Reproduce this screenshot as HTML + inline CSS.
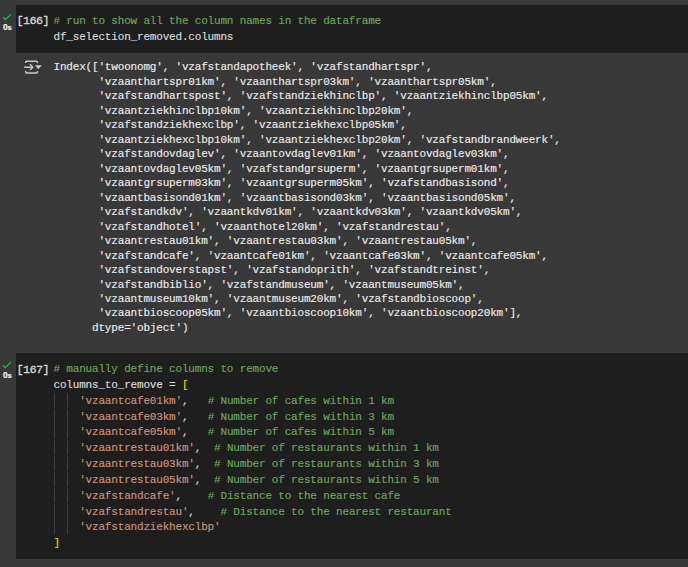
<!DOCTYPE html>
<html><head><meta charset="utf-8">
<style>
html,body{margin:0;padding:0;}
body{width:688px;height:567px;background:#383838;position:relative;overflow:hidden;font-family:"Liberation Mono",monospace;}
.cell{position:absolute;left:16px;right:0;background:#1e1e1e;}
.ln{position:absolute;white-space:pre;font-size:11px;letter-spacing:-0.18px;line-height:14px;height:14px;color:#dcdcdc;-webkit-text-stroke:0.15px currentColor;}
.out{color:#ebebeb;}
.c{color:#6ca65a;}
.s{color:#ce9178;}
.g{color:#ffd700;}
.cnt{position:absolute;white-space:pre;font-size:11.8px;letter-spacing:-0.55px;line-height:14px;color:#dadada;-webkit-text-stroke:0.3px currentColor;}
.secs{position:absolute;font-family:"Liberation Sans",sans-serif;font-weight:bold;font-size:8.5px;line-height:10px;color:#f0f0f0;letter-spacing:-0.2px;-webkit-text-stroke:0.2px currentColor;}
.guide{position:absolute;width:1px;background:#3e3e3e;}
svg{position:absolute;overflow:visible;}
</style></head><body>

<!-- cell 1 -->
<div class="cell" style="top:5px;height:48px;"></div>
<svg style="left:0;top:0" width="20" height="40"><polyline points="3,17.3 5.5,19.4 10.8,14.4" fill="none" stroke="#12c65a" stroke-width="1.15"/></svg>
<div class="secs" style="left:3px;top:22px;">0<span style="font-size:7.6px">s</span></div>
<div class="cnt" style="left:16.5px;top:13.8px;">[166]</div>
<div class="ln" style="left:53.5px;top:14px;"><span class="c"># run to show all the column names in the dataframe</span></div>
<div class="ln" style="left:53.5px;top:30px;">df_selection_removed.columns</div>

<!-- output icon -->
<svg style="left:0;top:0" width="60" height="90">
<g fill="none" stroke="#c8c8c8" stroke-width="1.4">
<path d="M25.6,63 V62.1 Q25.6,61.2 26.5,61.2 H36.5 Q37.4,61.2 37.4,62.1 V63"/>
<path d="M25.6,71 V72.1 Q25.6,73 26.5,73 H36.5 Q37.4,73 37.4,72.1 V71"/>
<path d="M24.2,67.2 H32.4 M30,64.3 L32.8,67.2 L30,70"/>
</g>
<path d="M35,65.3 H41.9 L38.3,69.2 Z" fill="#c8c8c8"/>
</svg>

<div class="ln out" style="left:53.5px;top:60px;">Index(['twoonomg', 'vzafstandapotheek', 'vzafstandhartspr',</div>
<div class="ln out" style="left:53.5px;top:74.5px;">       'vzaanthartspr01km', 'vzaanthartspr03km', 'vzaanthartspr05km',</div>
<div class="ln out" style="left:53.5px;top:89px;">       'vzafstandhartspost', 'vzafstandziekhinclbp', 'vzaantziekhinclbp05km',</div>
<div class="ln out" style="left:53.5px;top:103.5px;">       'vzaantziekhinclbp10km', 'vzaantziekhinclbp20km',</div>
<div class="ln out" style="left:53.5px;top:118px;">       'vzafstandziekhexclbp', 'vzaantziekhexclbp05km',</div>
<div class="ln out" style="left:53.5px;top:132.5px;">       'vzaantziekhexclbp10km', 'vzaantziekhexclbp20km', 'vzafstandbrandweerk',</div>
<div class="ln out" style="left:53.5px;top:147px;">       'vzafstandovdaglev', 'vzaantovdaglev01km', 'vzaantovdaglev03km',</div>
<div class="ln out" style="left:53.5px;top:161.5px;">       'vzaantovdaglev05km', 'vzafstandgrsuperm', 'vzaantgrsuperm01km',</div>
<div class="ln out" style="left:53.5px;top:176px;">       'vzaantgrsuperm03km', 'vzaantgrsuperm05km', 'vzafstandbasisond',</div>
<div class="ln out" style="left:53.5px;top:190.5px;">       'vzaantbasisond01km', 'vzaantbasisond03km', 'vzaantbasisond05km',</div>
<div class="ln out" style="left:53.5px;top:205px;">       'vzafstandkdv', 'vzaantkdv01km', 'vzaantkdv03km', 'vzaantkdv05km',</div>
<div class="ln out" style="left:53.5px;top:219.5px;">       'vzafstandhotel', 'vzaanthotel20km', 'vzafstandrestau',</div>
<div class="ln out" style="left:53.5px;top:234px;">       'vzaantrestau01km', 'vzaantrestau03km', 'vzaantrestau05km',</div>
<div class="ln out" style="left:53.5px;top:248.5px;">       'vzafstandcafe', 'vzaantcafe01km', 'vzaantcafe03km', 'vzaantcafe05km',</div>
<div class="ln out" style="left:53.5px;top:263px;">       'vzafstandoverstapst', 'vzafstandoprith', 'vzafstandtreinst',</div>
<div class="ln out" style="left:53.5px;top:277.5px;">       'vzafstandbiblio', 'vzafstandmuseum', 'vzaantmuseum05km',</div>
<div class="ln out" style="left:53.5px;top:292px;">       'vzaantmuseum10km', 'vzaantmuseum20km', 'vzafstandbioscoop',</div>
<div class="ln out" style="left:53.5px;top:306px;">       'vzaantbioscoop05km', 'vzaantbioscoop10km', 'vzaantbioscoop20km'],</div>
<div class="ln out" style="left:53.5px;top:321px;">      dtype='object')</div>

<!-- cell 2 -->
<div class="cell" style="top:353px;height:206px;"></div>
<svg style="left:0;top:0" width="20" height="400"><polyline points="2.9,365.3 5.3,367.7 10.8,362.1" fill="none" stroke="#12c65a" stroke-width="1.15"/></svg>
<div class="secs" style="left:3px;top:370px;">0<span style="font-size:7.6px">s</span></div>
<div class="cnt" style="left:16.5px;top:363.4px;">[167]</div>
<div class="guide" style="left:54px;top:393px;height:15px;"></div>
<div class="guide" style="left:67px;top:393px;height:15px;"></div>
<div class="guide" style="left:54px;top:409px;height:15px;"></div>
<div class="guide" style="left:67px;top:409px;height:15px;"></div>
<div class="guide" style="left:54px;top:424px;height:15px;"></div>
<div class="guide" style="left:67px;top:424px;height:15px;"></div>
<div class="guide" style="left:54px;top:440px;height:15px;"></div>
<div class="guide" style="left:67px;top:440px;height:15px;"></div>
<div class="guide" style="left:54px;top:456px;height:15px;"></div>
<div class="guide" style="left:67px;top:456px;height:15px;"></div>
<div class="guide" style="left:54px;top:472px;height:15px;"></div>
<div class="guide" style="left:67px;top:472px;height:15px;"></div>
<div class="guide" style="left:54px;top:488px;height:15px;"></div>
<div class="guide" style="left:67px;top:488px;height:15px;"></div>
<div class="guide" style="left:54px;top:504px;height:15px;"></div>
<div class="guide" style="left:67px;top:504px;height:15px;"></div>
<div class="guide" style="left:54px;top:519px;height:15px;"></div>
<div class="guide" style="left:67px;top:519px;height:15px;"></div>
<div class="ln" style="left:53.5px;top:362px;"><span class="c"># manually define columns to remove</span></div>
<div class="ln" style="left:53.5px;top:378px;">columns_to_remove = <span class="g">[</span></div>
<div class="ln" style="left:53.5px;top:394px;">    <span class="s">'vzaantcafe01km'</span>,   <span class="c"># Number of cafes within 1 km</span></div>
<div class="ln" style="left:53.5px;top:410px;">    <span class="s">'vzaantcafe03km'</span>,   <span class="c"># Number of cafes within 3 km</span></div>
<div class="ln" style="left:53.5px;top:425px;">    <span class="s">'vzaantcafe05km'</span>,   <span class="c"># Number of cafes within 5 km</span></div>
<div class="ln" style="left:53.5px;top:441px;">    <span class="s">'vzaantrestau01km'</span>,  <span class="c"># Number of restaurants within 1 km</span></div>
<div class="ln" style="left:53.5px;top:457px;">    <span class="s">'vzaantrestau03km'</span>,  <span class="c"># Number of restaurants within 3 km</span></div>
<div class="ln" style="left:53.5px;top:473px;">    <span class="s">'vzaantrestau05km'</span>,  <span class="c"># Number of restaurants within 5 km</span></div>
<div class="ln" style="left:53.5px;top:489px;">    <span class="s">'vzafstandcafe'</span>,    <span class="c"># Distance to the nearest cafe</span></div>
<div class="ln" style="left:53.5px;top:505px;">    <span class="s">'vzafstandrestau'</span>,    <span class="c"># Distance to the nearest restaurant</span></div>
<div class="ln" style="left:53.5px;top:520px;">    <span class="s">'vzafstandziekhexclbp'</span></div>
<div class="ln" style="left:53.5px;top:536px;"><span class="g">]</span></div>
</body></html>
